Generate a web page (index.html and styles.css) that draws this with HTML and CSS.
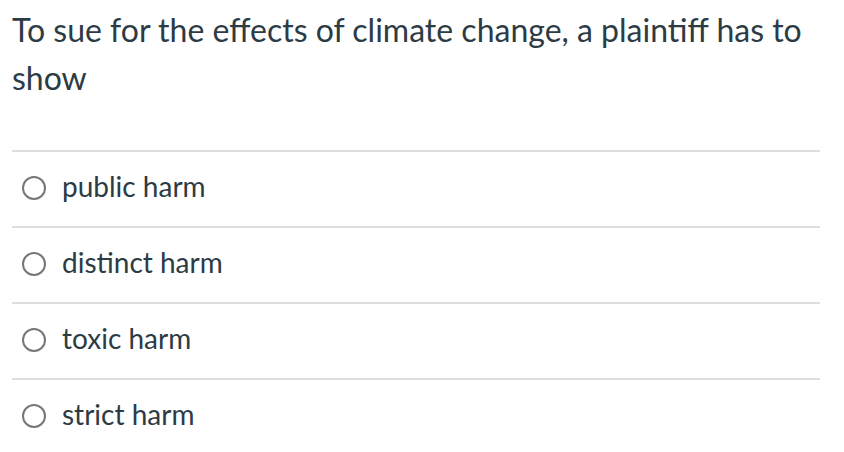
FILE: index.html
```html
<!DOCTYPE html>
<html>
<head>
<meta charset="utf-8">
<link rel="stylesheet" href="styles.css">
</head>
<body>
<div class="question">
  <div class="question-text">To sue for the effects of climate change, a plaintiff has to show</div>
  <div class="answers">
    <label class="answer"><span class="radio"></span><span class="label">public harm</span></label>
    <label class="answer"><span class="radio"></span><span class="label">distinct harm</span></label>
    <label class="answer"><span class="radio"></span><span class="label">toxic harm</span></label>
    <label class="answer"><span class="radio"></span><span class="label">strict harm</span></label>
  </div>
</div>
</body>
</html>
```
FILE: styles.css
```css
html, body {
  margin: 0;
  padding: 0;
  background: #ffffff;
}
body {
  font-family: Lato, "Noto Sans", sans-serif;
  color: #2d3b45;
}
.question {
  width: 808px;
  padding: 6px 12px 0 12px;
}
.question-text {
  font-size: 32px;
  line-height: 48px;
  margin-bottom: 48px;
}
.answers {
  display: flex;
  flex-direction: column;
}
.answer {
  display: flex;
  align-items: center;
  gap: 16px;
  height: 74px;
  border-top: 2px solid #dddddd;
  padding-left: 10px;
}
.radio {
  width: 20px;
  height: 20px;
  border: 2px solid #777777;
  border-radius: 50%;
  box-sizing: content-box;
  flex: none;
  margin-top: -2px;
}
.label {
  font-size: 28px;
  line-height: 34px;
  margin-top: -6px;
}
```
